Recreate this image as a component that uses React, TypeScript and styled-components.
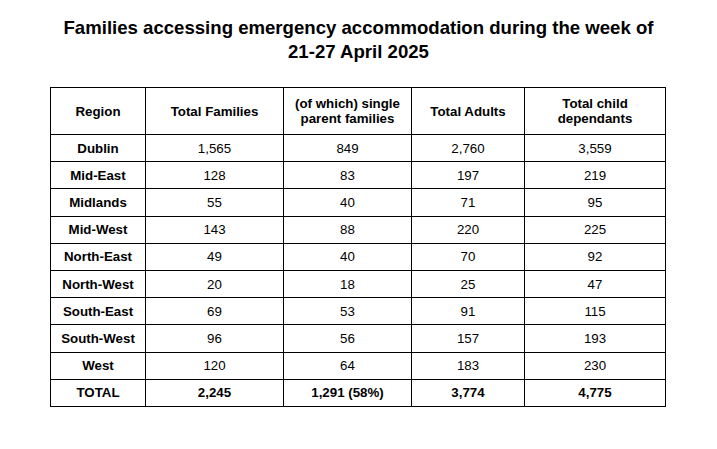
import React from 'react';
import styled, { createGlobalStyle } from 'styled-components';

type Row = {
  region: string;
  families: string;
  single: string;
  adults: string;
  children: string;
};

const rows: Row[] = [
  { region: 'Dublin', families: '1,565', single: '849', adults: '2,760', children: '3,559' },
  { region: 'Mid-East', families: '128', single: '83', adults: '197', children: '219' },
  { region: 'Midlands', families: '55', single: '40', adults: '71', children: '95' },
  { region: 'Mid-West', families: '143', single: '88', adults: '220', children: '225' },
  { region: 'North-East', families: '49', single: '40', adults: '70', children: '92' },
  { region: 'North-West', families: '20', single: '18', adults: '25', children: '47' },
  { region: 'South-East', families: '69', single: '53', adults: '91', children: '115' },
  { region: 'South-West', families: '96', single: '56', adults: '157', children: '193' },
  { region: 'West', families: '120', single: '64', adults: '183', children: '230' },
];

const GlobalStyle = createGlobalStyle`
  body {
    margin: 0;
    background: #fff;
    font-family: "Liberation Sans", Arial, sans-serif;
    color: #000;
  }
`;

const Page = styled.div`
  width: 717px;
  height: 449px;
  padding-top: 16px;
  box-sizing: border-box;
`;

const Title = styled.h1`
  margin: 0 0 23px;
  text-align: center;
  font-size: 18.6px;
  line-height: 24px;
  font-weight: 700;
`;

const Table = styled.table`
  margin-left: 50px;
  width: 615px;
  border-collapse: collapse;
  table-layout: fixed;
  font-size: 13.3px;
`;

const HeadCell = styled.th<{ $w: number }>`
  box-sizing: border-box;
  width: ${(p) => p.$w}px;
  height: 47px;
  padding: 0 2px;
  border: 1px solid #000;
  font-weight: 700;
  line-height: 15px;
  text-align: center;
  vertical-align: middle;
`;

const Cell = styled.td<{ $bold?: boolean }>`
  height: 26.2px;
  padding: 0;
  border: 1px solid #000;
  text-align: center;
  vertical-align: middle;
  font-weight: ${(p) => (p.$bold ? 700 : 400)};
`;

export default function App() {
  return (
    <Page>
      <GlobalStyle />
      <Title>
        Families accessing emergency accommodation during the week of
        <br />
        21-27 April 2025
      </Title>
      <Table>
        <thead>
          <tr>
            <HeadCell $w={95}>Region</HeadCell>
            <HeadCell $w={138}>Total Families</HeadCell>
            <HeadCell $w={128}>
              (of which) single
              <br />
              parent families
            </HeadCell>
            <HeadCell $w={113}>Total Adults</HeadCell>
            <HeadCell $w={141}>
              Total child
              <br />
              dependants
            </HeadCell>
          </tr>
        </thead>
        <tbody>
          {rows.map((r) => (
            <tr key={r.region}>
              <Cell $bold>{r.region}</Cell>
              <Cell>{r.families}</Cell>
              <Cell>{r.single}</Cell>
              <Cell>{r.adults}</Cell>
              <Cell>{r.children}</Cell>
            </tr>
          ))}
          <tr>
            <Cell $bold>TOTAL</Cell>
            <Cell $bold>2,245</Cell>
            <Cell $bold>1,291 (58%)</Cell>
            <Cell $bold>3,774</Cell>
            <Cell $bold>4,775</Cell>
          </tr>
        </tbody>
      </Table>
    </Page>
  );
}
